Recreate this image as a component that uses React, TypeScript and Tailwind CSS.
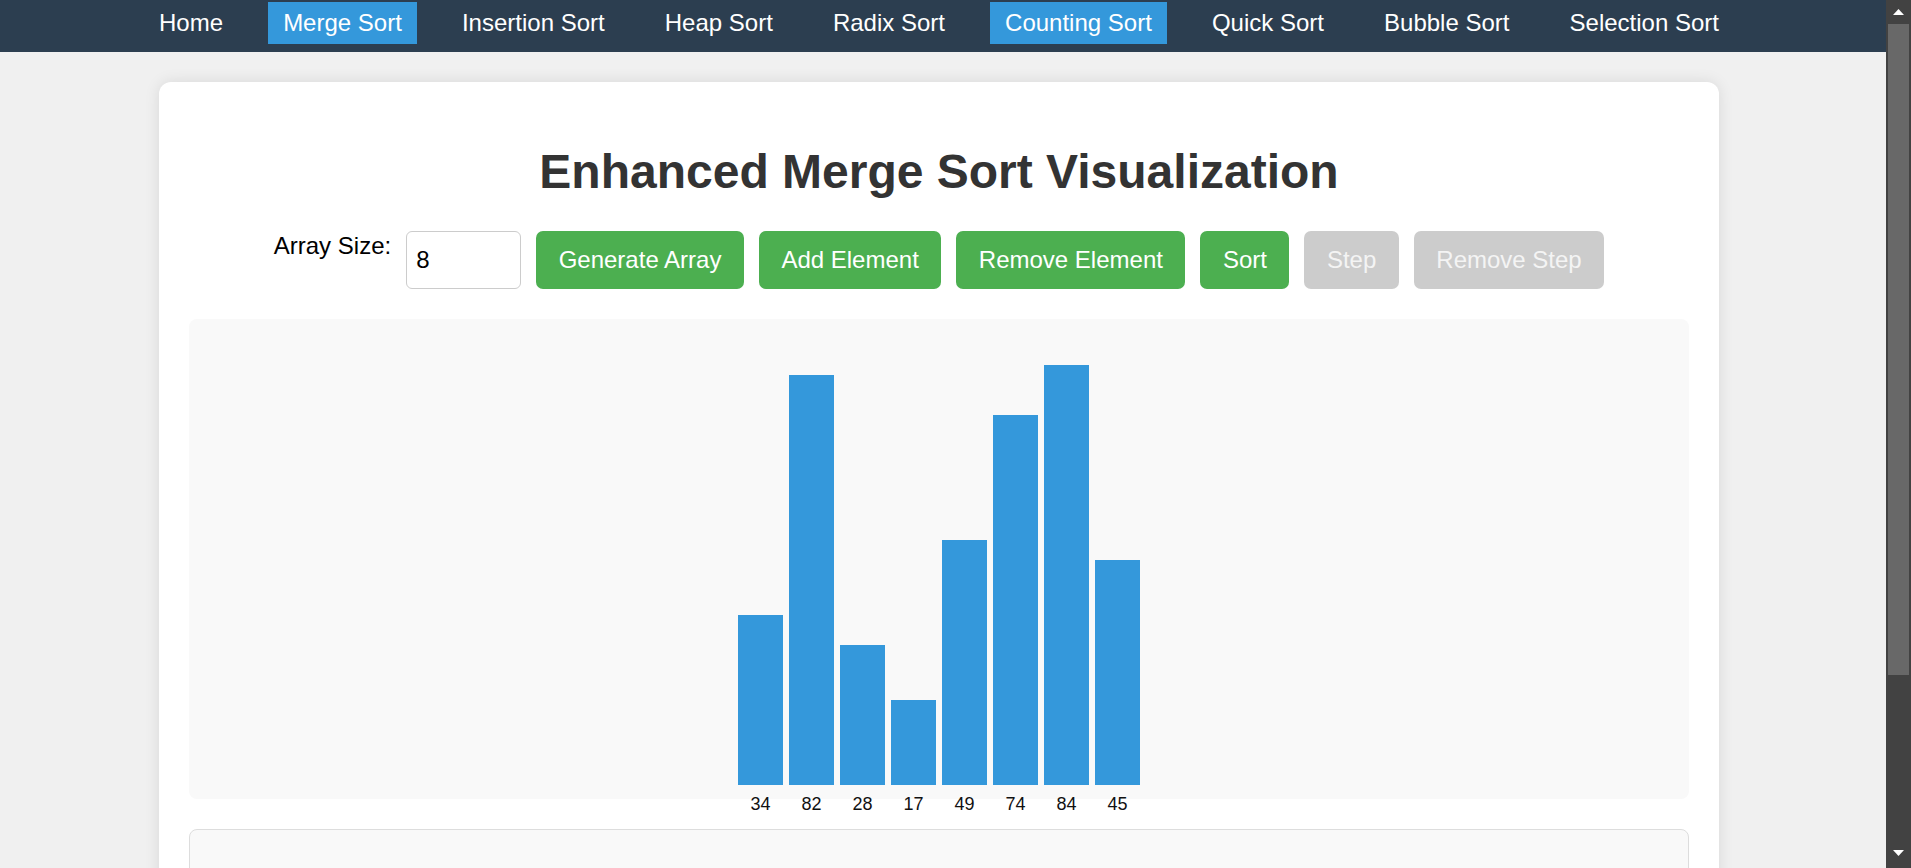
import React from "react";

const navItems = [
  { label: "Home", active: false },
  { label: "Merge Sort", active: true },
  { label: "Insertion Sort", active: false },
  { label: "Heap Sort", active: false },
  { label: "Radix Sort", active: false },
  { label: "Counting Sort", active: true },
  { label: "Quick Sort", active: false },
  { label: "Bubble Sort", active: false },
  { label: "Selection Sort", active: false },
];

const values = [34, 82, 28, 17, 49, 74, 84, 45];

function Button({ label, disabled }: { label: string; disabled?: boolean }) {
  return (
    <button
      className={
        disabled
          ? "h-[58px] px-[22.5px] rounded-[7px] bg-[#cccccc] text-[#f4f4f4] text-[24px] leading-none"
          : "h-[58px] px-[22.5px] rounded-[7px] bg-[#4caf50] text-white text-[24px] leading-none"
      }
    >
      {label}
    </button>
  );
}

export default function App() {
  return (
    <div
      className="flex h-screen w-full overflow-hidden bg-[#f0f0f0]"
      style={{ fontFamily: '"Liberation Sans", Arial, sans-serif' }}
    >
      <div className="flex-1 min-w-0 overflow-hidden">
        <nav className="h-[52px] bg-[#2c3e50] flex justify-center gap-[30.1px] pt-[2px] pr-[8px]">
          {navItems.map((it) => (
            <a
              key={it.label}
              className={
                it.active
                  ? "h-[42px] px-[15px] flex items-center text-white text-[24px] bg-[#3498db]"
                  : "h-[42px] px-[15px] flex items-center text-white text-[24px]"
              }
            >
              {it.label}
            </a>
          ))}
        </nav>

        <div className="pr-[8px]">
          <div className="mx-auto mt-[30px] w-[1560px] bg-white rounded-[12px] p-[30px] shadow-[0_0_15px_rgba(0,0,0,0.1)]">
            <h1 className="my-[32px] text-center text-[48px] font-bold text-[#333333] leading-[55px]">
              Enhanced Merge Sort Visualization
            </h1>

            <div className="flex justify-center items-start gap-[15px]">
              <label className="text-[24px] text-black leading-[28px] pt-[1px]">Array Size:</label>
              <div className="w-[115px] h-[58px] border border-[#cccccc] rounded-[6px] flex items-center pl-[9px] text-[24px] text-black">
                8
              </div>
              <Button label="Generate Array" />
              <Button label="Add Element" />
              <Button label="Remove Element" />
              <Button label="Sort" />
              <Button label="Step" disabled />
              <Button label="Remove Step" disabled />
            </div>

            <div className="mt-[30px] h-[480px] bg-[#f9f9f9] rounded-[8px] flex items-end justify-center pb-[14px]">
              {values.map((v, i) => (
                <div
                  key={i}
                  className="relative w-[45px] mx-[3px] bg-[#3498db]"
                  style={{ height: v * 5 }}
                >
                  <div className="absolute top-full left-0 right-0 mt-[9px] text-center text-[18px] leading-[20px] text-[#111]">
                    {v}
                  </div>
                </div>
              ))}
            </div>

            <div className="mt-[30px] h-[300px] bg-[#f9f9f9] border border-[#dddddd] rounded-[8px]" />
          </div>
        </div>
      </div>

      <div className="w-[25px] h-full bg-[#424242] flex flex-col">
        <div className="h-[24px] flex items-center justify-center">
          <svg width="11" height="6" viewBox="0 0 11 6">
            <polygon points="5.5,0 11,6 0,6" fill="#ffffff" />
          </svg>
        </div>
        <div className="h-[651px] mx-[2px] bg-[#686868]" />
        <div className="flex-1" />
        <div className="h-[18px] flex items-start justify-center">
          <svg width="11" height="6" viewBox="0 0 11 6">
            <polygon points="0,0 11,0 5.5,6" fill="#ffffff" />
          </svg>
        </div>
      </div>
    </div>
  );
}
